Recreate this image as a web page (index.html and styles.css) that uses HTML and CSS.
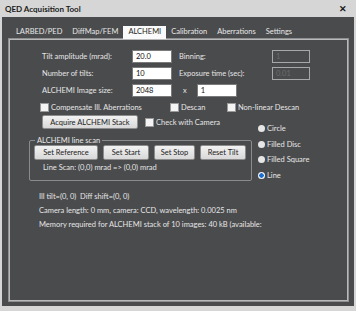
FILE: index.html
```html
<!DOCTYPE html>
<html lang="en">
<head>
    <meta charset="UTF-8">
    <title>QED Acquisition Tool</title>
    <link rel="stylesheet" href="styles.css">
</head>
<body>
    <div class="titlebar">
        <span class="title">QED Acquisition Tool</span>
        <span class="close">&#x2715;</span>
    </div>
    <div class="window-body">
        <div class="tabs">
            <span class="tab">LARBED/PED</span>
            <span class="tab">DiffMap/FEM</span>
            <span class="tab active">ALCHEMI</span>
            <span class="tab">Calibration</span>
            <span class="tab">Aberrations</span>
            <span class="tab">Settings</span>
        </div>
        <div class="panel">
            <div class="form-row">
                <label class="lbl">Tilt amplitude (mrad):</label>
                <input class="field" type="text" value="20.0">
                <label class="lbl2">Binning:</label>
                <input class="field off" type="text" value="1" disabled>
            </div>
            <div class="form-row">
                <label class="lbl">Number of tilts:</label>
                <input class="field" type="text" value="10">
                <label class="lbl2">Exposure time (sec):</label>
                <input class="field off" type="text" value="0.01" disabled>
            </div>
            <div class="form-row">
                <label class="lbl">ALCHEMI Image size:</label>
                <input class="field" type="text" value="2048">
                <span class="times">x</span>
                <input class="field" type="text" value="1">
            </div>
            <div class="check-row">
                <label class="check c1"><span class="box"></span>Compensate Ill. Aberrations</label>
                <label class="check c2"><span class="box"></span>Descan</label>
                <label class="check"><span class="box"></span>Non-linear Descan</label>
            </div>
            <div class="lower">
                <div class="lower-left">
                    <div class="acquire-row">
                        <button class="btn acquire">Acquire ALCHEMI Stack</button>
                        <label class="check"><span class="box"></span>Check with Camera</label>
                    </div>
                    <fieldset class="group">
                        <legend>ALCHEMI line scan</legend>
                        <div class="btn-row">
                            <button class="btn">Set Reference</button>
                            <button class="btn">Set Start</button>
                            <button class="btn">Set Stop</button>
                            <button class="btn">Reset Tilt</button>
                        </div>
                        <div class="scan-text">Line Scan: (0,0) mrad =&gt; (0,0) mrad</div>
                    </fieldset>
                </div>
                <div class="radios">
                    <label class="radio"><span class="dot"></span>Circle</label>
                    <label class="radio"><span class="dot"></span>Filled Disc</label>
                    <label class="radio"><span class="dot"></span>Filled Square</label>
                    <label class="radio"><span class="dot on"></span>Line</label>
                </div>
            </div>
            <div class="info">
                <p>Ill tilt=(0, 0)&nbsp; Diff shift=(0, 0)</p>
                <p>Camera length: 0 mm, camera: CCD, wavelength: 0.0025 nm</p>
                <p>Memory required for ALCHEMI stack of 10 images: 40 kB (available:</p>
            </div>
        </div>
    </div>
</body>
</html>
```

FILE: styles.css
```css
body {
    margin: 0;
    width: 356px;
    height: 311px;
    background-color: #d6d6d6;
    font-family: Lato, "Open Sans", sans-serif;
    font-size: 7.5px;
    color: #e6e6e6;
    overflow: hidden;
}
.titlebar {
    height: 17px;
    display: flex;
    align-items: center;
    justify-content: space-between;
    padding: 0 9px 0 5px;
    color: #1a1a1a;
}
.title {
    font-weight: bold;
    font-size: 8px;
}
.close {
    font-size: 9px;
    font-weight: bold;
}
.window-body {
    margin: 0 2px;
    height: 289px;
    background-color: #4a4b4d;
    padding: 9px 5px 0 6px;
    box-sizing: border-box;
}
.tabs {
    display: flex;
    padding-left: 3px;
    height: 12px;
    align-items: flex-end;
}
.tab {
    padding: 0 5px;
    height: 12px;
    line-height: 12px;
    color: #e8e8e8;
}
.tab.active {
    background-color: #fafafa;
    color: #1e1e1e;
    height: 13px;
    margin-bottom: -1px;
    position: relative;
    z-index: 1;
}
.panel {
    height: 264px;
    border: 1px solid #8f9092;
    box-shadow: inset 0 0 0 1px #b9b9ba;
    box-sizing: border-box;
    padding: 9px 0 0 33px;
}
.form-row {
    display: flex;
    align-items: center;
    height: 17px;
}
.lbl {
    width: 90px;
}
.lbl2 {
    width: 93px;
    margin-left: 7px;
}
.field {
    width: 40px;
    height: 13px;
    box-sizing: border-box;
    border: 1px solid #7a7a7a;
    background-color: #ffffff;
    font-family: inherit;
    font-size: 7.5px;
    padding: 0 3px;
    color: #111;
}
.field.off {
    width: 38px;
    background-color: #4a4b4d;
    border: 1px solid #a8a8a8;
    color: #6c6c6c;
}
.times {
    margin: 0 10px 0 11px;
}
.check-row {
    display: flex;
    align-items: center;
    height: 16px;
    margin-left: -2px;
}
.check {
    display: flex;
    align-items: center;
}
.c1 {
    width: 130px;
}
.c2 {
    width: 57px;
}
.box {
    width: 7px;
    height: 7px;
    background-color: #f4f4f4;
    border: 1px solid #9a9a9a;
    margin-right: 2px;
}
.lower {
    display: flex;
}
.lower-left {
    margin-left: -13px;
}
.acquire-row {
    display: flex;
    align-items: center;
    margin-left: 13px;
    gap: 7px;
}
.btn {
    font-family: inherit;
    font-size: 7.5px;
    color: #222;
    background: linear-gradient(#f2f2f2, #d8d8d8);
    border: 1px solid #8c8c8c;
    border-radius: 2px;
    height: 15px;
    padding: 0 3px;
}
.acquire {
    height: 14px;
    width: 96px;
}
.group {
    margin: 7px 0 0 0;
    width: 223px;
    height: 45px;
    box-sizing: border-box;
    border: 1px solid #8a8b8d;
    border-radius: 2px;
    padding: 2px 0 0 4px;
}
.group legend {
    padding: 0 2px;
    margin-left: 1px;
    color: #e8e8e8;
}
.btn-row {
    display: flex;
    gap: 5px;
    margin-top: -2px;
}
.btn-row .btn {
    width: 64px;
}
.btn-row .btn:nth-child(2) {
    width: 46px;
}
.btn-row .btn:nth-child(3) {
    width: 41px;
}
.btn-row .btn:nth-child(4) {
    width: 46px;
}
.scan-text {
    margin: 3px 0 0 9px;
}
.radios {
    margin: 6px 0 0 6px;
    display: flex;
    flex-direction: column;
}
.radio {
    display: flex;
    align-items: center;
    height: 15.5px;
}
.dot {
    width: 7px;
    height: 7px;
    border-radius: 50%;
    background-color: #e6e6e6;
    margin-right: 2px;
}
.dot.on {
    background: radial-gradient(circle, #1a6fd0 2px, #f2f2f2 2.5px);
}
.info {
    margin: 7px 0 0 -3px;
}
.info p {
    margin: 0;
    height: 14px;
    line-height: 14px;
}
```
